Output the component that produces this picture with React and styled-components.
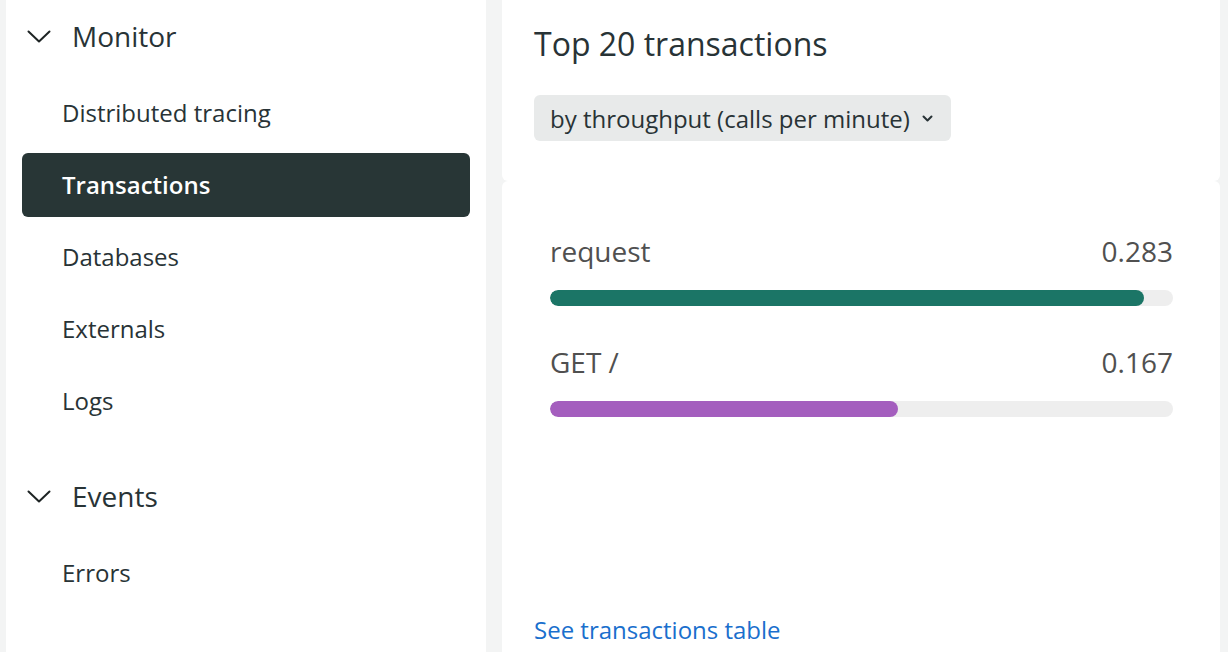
import React from 'react';
import styled, { createGlobalStyle } from 'styled-components';

const GlobalStyle = createGlobalStyle`
  html, body {
    margin: 0;
    padding: 0;
    background: #f3f4f4;
    font-family: 'Open Sans', 'Liberation Sans', sans-serif;
    -webkit-font-smoothing: antialiased;
  }
`;

const sections = [
  {
    title: 'Monitor',
    items: ['Distributed tracing', 'Transactions', 'Databases', 'Externals', 'Logs'],
  },
  {
    title: 'Events',
    items: ['Errors'],
  },
];

const transactions = [
  { name: 'request', value: '0.283', pct: 95.3, color: '#1b7566' },
  { name: 'GET /', value: '0.167', pct: 55.9, color: '#a45ebe' },
];

const Chevron = ({ width = 24, height = 13 }) => (
  <svg width={width} height={height} viewBox="0 0 24 13" fill="none">
    <polyline points="1.5,1.5 12,11.5 22.5,1.5" stroke="#1e2424" strokeWidth="2" strokeLinecap="round" strokeLinejoin="round" />
  </svg>
);

const SmallChevron = () => (
  <svg width="11" height="7" viewBox="0 0 11 7" fill="none">
    <polyline points="1.5,1.5 5.5,5.5 9.5,1.5" stroke="#283336" strokeWidth="2" strokeLinecap="round" strokeLinejoin="round" />
  </svg>
);

export default function App() {
  return (
    <>
      <GlobalStyle />
      <Page>
        <Sidebar>
          {sections.map((section) => (
            <Section key={section.title}>
              <SectionHeader>
                <ChevronWrap>
                  <Chevron />
                </ChevronWrap>
                {section.title}
              </SectionHeader>
              <NavList>
                {section.items.map((item) => (
                  <NavItem key={item} active={item === 'Transactions'}>
                    {item}
                  </NavItem>
                ))}
              </NavList>
            </Section>
          ))}
        </Sidebar>

        <Main>
          <HeaderCard>
            <Title>Top 20 transactions</Title>
            <Dropdown>
              by throughput (calls per minute)
              <SmallChevron />
            </Dropdown>
          </HeaderCard>
          <ChartCard>
            <ChartArea>
              {transactions.map((t) => (
                <BarRow key={t.name}>
                  <BarLabel>
                    <span>{t.name}</span>
                    <span>{t.value}</span>
                  </BarLabel>
                  <Track>
                    <Fill color={t.color} style={{ width: `${t.pct}%` }} />
                  </Track>
                </BarRow>
              ))}
            </ChartArea>
            <TableLink href="#">See transactions table</TableLink>
          </ChartCard>
        </Main>
      </Page>
    </>
  );
}

const Page = styled.div`
  display: flex;
  gap: 16px;
  height: 652px;
  padding: 0 8px 0 6px;
  box-sizing: border-box;
  overflow: hidden;
`;

const Sidebar = styled.nav`
  width: 480px;
  flex-shrink: 0;
  background: #ffffff;
  padding: 0 16px;
  box-sizing: border-box;
  display: flex;
  flex-direction: column;
  gap: 27px;
`;

const Section = styled.div`
  display: flex;
  flex-direction: column;
  gap: 9px;
`;

const SectionHeader = styled.div`
  display: flex;
  align-items: center;
  height: 72px;
  padding-bottom: 1px;
  box-sizing: border-box;
  font-size: 28px;
  color: #283336;
`;

const ChevronWrap = styled.span`
  display: flex;
  width: 50px;
  padding-left: 5px;
  padding-top: 1px;
  box-sizing: border-box;
`;

const NavList = styled.div`
  display: flex;
  flex-direction: column;
  gap: 8px;
`;

const NavItem = styled.div`
  display: flex;
  align-items: center;
  height: 64px;
  padding: 0 0 2px 40px;
  box-sizing: border-box;
  border-radius: 6px;
  font-size: 24px;
  font-weight: ${(p) => (p.active ? 600 : 400)};
  color: ${(p) => (p.active ? '#ffffff' : '#283336')};
  background: ${(p) => (p.active ? '#283636' : 'transparent')};
`;

const Main = styled.main`
  flex: 1;
  display: flex;
  flex-direction: column;
`;

const HeaderCard = styled.div`
  background: #ffffff;
  border-radius: 0 0 6px 6px;
  padding: 24px 32px 40px;
`;

const Title = styled.h2`
  margin: 0 0 31px;
  font-size: 32px;
  line-height: 40px;
  font-weight: 400;
  color: #283336;
`;

const Dropdown = styled.button`
  display: inline-flex;
  align-items: center;
  gap: 12px;
  height: 46px;
  padding: 0 18px 0 16px;
  border: none;
  border-radius: 6px;
  background: #e8eaea;
  font-family: inherit;
  font-size: 24px;
  color: #283336;
`;

const ChartCard = styled.div`
  flex: 1;
  background: #ffffff;
  border-radius: 6px 6px 0 0;
  padding: 32px 32px 0;
`;

const ChartArea = styled.div`
  height: 401px;
  padding: 20px 15px 0 16px;
  box-sizing: border-box;
  display: flex;
  flex-direction: column;
  gap: 38px;
`;

const BarRow = styled.div`
  display: flex;
  flex-direction: column;
  gap: 21px;
`;

const BarLabel = styled.div`
  display: flex;
  justify-content: space-between;
  font-size: 28px;
  line-height: 36px;
  color: #505050;
`;

const Track = styled.div`
  height: 16px;
  border-radius: 8px;
  background: #eeeeee;
  overflow: hidden;
`;

const Fill = styled.div`
  height: 100%;
  border-radius: 8px;
  background: ${(p) => p.color};
`;

const TableLink = styled.a`
  display: block;
  font-size: 24px;
  line-height: 32px;
  color: #1a6fcd;
  text-decoration: none;
`;
